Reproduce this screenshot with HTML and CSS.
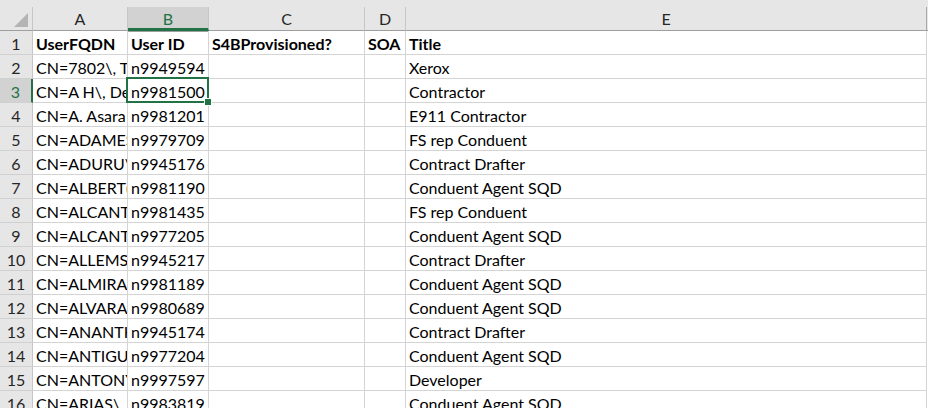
FILE: index.html
```html
<!DOCTYPE html>
<html>
<head>
<meta charset="utf-8">
<link rel="stylesheet" href="styles.css">
</head>
<body>
<div class="sheet">
  <div class="hd corner"><span class="tri"></span></div>
  <div class="hd col">A</div>
  <div class="hd col sel-col">B</div>
  <div class="hd col">C</div>
  <div class="hd col">D</div>
  <div class="hd col">E</div>
  <div class="hd edge"></div>

  <div class="rh">1</div><div class="c b">UserFQDN</div><div class="c b">User ID</div><div class="c b">S4BProvisioned?</div><div class="c b">SOA</div><div class="c b">Title</div><div class="e"></div>
  <div class="rh">2</div><div class="c">CN=7802\, T</div><div class="c">n9949594</div><div class="c"></div><div class="c"></div><div class="c">Xerox</div><div class="e"></div>
  <div class="rh sel-row">3</div><div class="c">CN=A H\, De</div><div class="c active">n9981500<span class="sel"><span class="handle"></span></span></div><div class="c"></div><div class="c"></div><div class="c">Contractor</div><div class="e"></div>
  <div class="rh">4</div><div class="c">CN=A. Asara</div><div class="c">n9981201</div><div class="c"></div><div class="c"></div><div class="c">E911 Contractor</div><div class="e"></div>
  <div class="rh">5</div><div class="c">CN=ADAMES</div><div class="c">n9979709</div><div class="c"></div><div class="c"></div><div class="c">FS rep Conduent</div><div class="e"></div>
  <div class="rh">6</div><div class="c">CN=ADURU\</div><div class="c">n9945176</div><div class="c"></div><div class="c"></div><div class="c">Contract Drafter</div><div class="e"></div>
  <div class="rh">7</div><div class="c">CN=ALBERT(</div><div class="c">n9981190</div><div class="c"></div><div class="c"></div><div class="c">Conduent Agent SQD</div><div class="e"></div>
  <div class="rh">8</div><div class="c">CN=ALCANT.</div><div class="c">n9981435</div><div class="c"></div><div class="c"></div><div class="c">FS rep Conduent</div><div class="e"></div>
  <div class="rh">9</div><div class="c">CN=ALCANT.</div><div class="c">n9977205</div><div class="c"></div><div class="c"></div><div class="c">Conduent Agent SQD</div><div class="e"></div>
  <div class="rh">10</div><div class="c">CN=ALLEMS</div><div class="c">n9945217</div><div class="c"></div><div class="c"></div><div class="c">Contract Drafter</div><div class="e"></div>
  <div class="rh">11</div><div class="c">CN=ALMIRA\</div><div class="c">n9981189</div><div class="c"></div><div class="c"></div><div class="c">Conduent Agent SQD</div><div class="e"></div>
  <div class="rh">12</div><div class="c">CN=ALVARAI</div><div class="c">n9980689</div><div class="c"></div><div class="c"></div><div class="c">Conduent Agent SQD</div><div class="e"></div>
  <div class="rh">13</div><div class="c">CN=ANANTH</div><div class="c">n9945174</div><div class="c"></div><div class="c"></div><div class="c">Contract Drafter</div><div class="e"></div>
  <div class="rh">14</div><div class="c">CN=ANTIGU.</div><div class="c">n9977204</div><div class="c"></div><div class="c"></div><div class="c">Conduent Agent SQD</div><div class="e"></div>
  <div class="rh">15</div><div class="c">CN=ANTONY</div><div class="c">n9997597</div><div class="c"></div><div class="c"></div><div class="c">Developer</div><div class="e"></div>
  <div class="rh">16</div><div class="c">CN=ARIAS\.</div><div class="c">n9983819</div><div class="c"></div><div class="c"></div><div class="c">Conduent Agent SQD</div><div class="e"></div>
</div>
</body>
</html>
```

FILE: styles.css
```css
html, body {
  margin: 0;
  padding: 0;
  background: #e6e6e6;
  overflow: hidden;
}
body {
  padding-top: 7px;
  font-family: Lato, "Open Sans", "Liberation Sans", sans-serif;
  font-size: 16px;
  color: #000;
}
.sheet {
  display: grid;
  grid-template-columns: 33px 95px 81px 156px 41px 521px 1px;
  grid-auto-rows: 24px;
  background: #fff;
}
.hd {
  background: #e6e6e6;
  border-bottom: 1px solid #9e9e9e;
  border-right: 1px solid #c6c6c6;
  box-sizing: border-box;
  color: #262626;
  text-align: center;
  line-height: 23px;
}
.hd.edge {
  border-right: none;
}
.hd.col:nth-child(6) {
  border-right-color: #a8a8a8;
}
.corner {
  position: relative;
}
.tri {
  position: absolute;
  right: 4px;
  bottom: 3px;
  width: 0;
  height: 0;
  border-left: 14px solid transparent;
  border-bottom: 14px solid #b4b4b4;
}
.sel-col {
  background: #d2d2d2;
  color: #217346;
  border-bottom: 3px solid #217346;
  box-shadow: 0 1px 0 #9e9e9e;
}
.rh {
  background: #e6e6e6;
  border-bottom: 1px solid #d0d0d0;
  border-right: 1px solid #c6c6c6;
  box-sizing: border-box;
  color: #262626;
  text-align: center;
  line-height: 25px;
}
.sel-row {
  background: #d2d2d2;
  color: #217346;
  border-right: 2px solid #217346;
}
.c {
  border-bottom: 1px solid #d4d4d4;
  border-right: 1px solid #d4d4d4;
  box-sizing: border-box;
  padding: 0 3px;
  line-height: 25px;
  white-space: nowrap;
  overflow: hidden;
  text-overflow: clip;
}
.c.b {
  font-weight: bold;
}
.e {
  background: #fff;
}
.active {
  position: relative;
  overflow: visible;
}
.sel {
  position: absolute;
  left: -2px;
  top: -2px;
  right: -1px;
  bottom: -1px;
  border: 2px solid #217346;
  pointer-events: none;
}
.handle {
  position: absolute;
  right: -5px;
  bottom: -5px;
  width: 6px;
  height: 6px;
  background: #217346;
  border: 1px solid #fff;
}
```
